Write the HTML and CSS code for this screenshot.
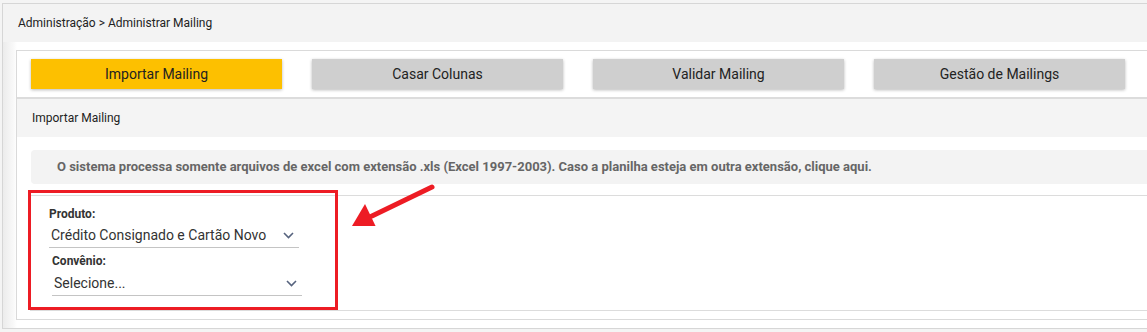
FILE: index.html
```html
<!doctype html>
<html>
<head>
<meta charset="utf-8">
<title>Administrar Mailing</title>
<link rel="stylesheet" href="styles.css">
</head>
<body>
<div class="wrap">
    <div class="crumb">Administração &gt; Administrar Mailing</div>
    <div class="main">
        <div class="card">
            <ul class="tabList">
                <li class="ac"><a href="javascript:;">Importar Mailing</a></li>
                <li><a href="javascript:;">Casar Colunas</a></li>
                <li><a href="javascript:;">Validar Mailing</a></li>
                <li><a href="javascript:;">Gestão de Mailings</a></li>
            </ul>
            <div class="panelTit">Importar Mailing</div>
            <div class="info">O sistema processa somente arquivos de excel com extensão .xls (Excel 1997-2003). Caso a planilha esteja em outra extensão, clique aqui.</div>
            <div class="formBox">
                <div class="field">
                    <label>Produto:</label>
                    <div class="sel">
                        <span>Crédito Consignado e Cartão Novo</span>
                        <svg width="11" height="7" viewBox="0 0 11 7"><path d="M1 1l4.5 4.5L10 1" fill="none" stroke="#56637e" stroke-width="1.6"/></svg>
                    </div>
                </div>
                <div class="field f2">
                    <label>Convênio:</label>
                    <div class="sel">
                        <span>Selecione...</span>
                        <svg width="11" height="7" viewBox="0 0 11 7"><path d="M1 1l4.5 4.5L10 1" fill="none" stroke="#56637e" stroke-width="1.6"/></svg>
                    </div>
                </div>
            </div>
        </div>
    </div>
</div>
<!-- marcação vermelha por cima -->
<div class="mark"></div>
<svg class="arrow" width="90" height="50" viewBox="0 0 90 50">
    <path d="M82 11L22 40" stroke="#ed1c24" stroke-width="5" stroke-linecap="round"/>
    <polygon points="2,50 15,28 27,53" fill="#ed1c24"/>
</svg>
</body>
</html>
```
FILE: styles.css
```css
*{ margin:0; padding:0; box-sizing:border-box;}
a{ text-decoration:none; color:inherit;}
ul{ list-style:none}
body{ background:#f4f4f4; font-family:Roboto, "Liberation Sans", Arial, sans-serif; color:#222; overflow:hidden; position:relative; height:332px;}
.wrap{ width:1200px; margin:3px 0 0 2px; border:1px solid #d6d6d6; background:#f3f3f3;}
.crumb{ height:38px; line-height:38px; padding-left:15px; font-size:12px; color:#222;}
.main{ background:linear-gradient(90deg,#ececec 0,#f8f8f8 10px,#fff 14px); padding:8px 0 8px 13px;}
.card{ border:1px solid #dadada; background:#fff;}
.tabList{ display:flex; gap:30px; padding:8px 0 8px 14px; border-bottom:2px solid #dcdcdc;}
.tabList li a{ display:block; width:251px; height:30px; line-height:30px; text-align:center; font-size:14px; background:#cfcfcf; color:#222; box-shadow:0 1px 3px rgba(0,0,0,.28);}
.tabList .ac a{ background:#fdc000;}
.panelTit{ height:38px; line-height:38px; background:#f4f4f4; padding-left:15px; font-size:12px; color:#222;}
.info{ margin:13px 0 0 14px; height:34px; line-height:34px; background:#f3f3f3; border-radius:4px 0 0 4px; padding-left:26px; font-size:13px; font-weight:bold; color:#666;}
.formBox{ margin:11px 0 8px 13px; border:1px solid #dcdcdc; padding:11px 0 14px 18px;}
.field label{ display:block; font-size:12px; line-height:14px; font-weight:bold; color:#333;}
.sel{ width:250px; height:25px; margin-top:2px; border-bottom:1px solid #c4c4c4; display:flex; align-items:center; justify-content:space-between; padding:0 5px 0 2px; font-size:14px; color:#333;}
.f2{ margin-top:6px; padding-left:3px;}
.f2 .sel{ margin-top:3px;}
.mark{ position:absolute; left:28px; top:190px; width:310px; height:120px; border:3px solid #ed1c24;}
.arrow{ position:absolute; left:350px; top:176px;}
```
